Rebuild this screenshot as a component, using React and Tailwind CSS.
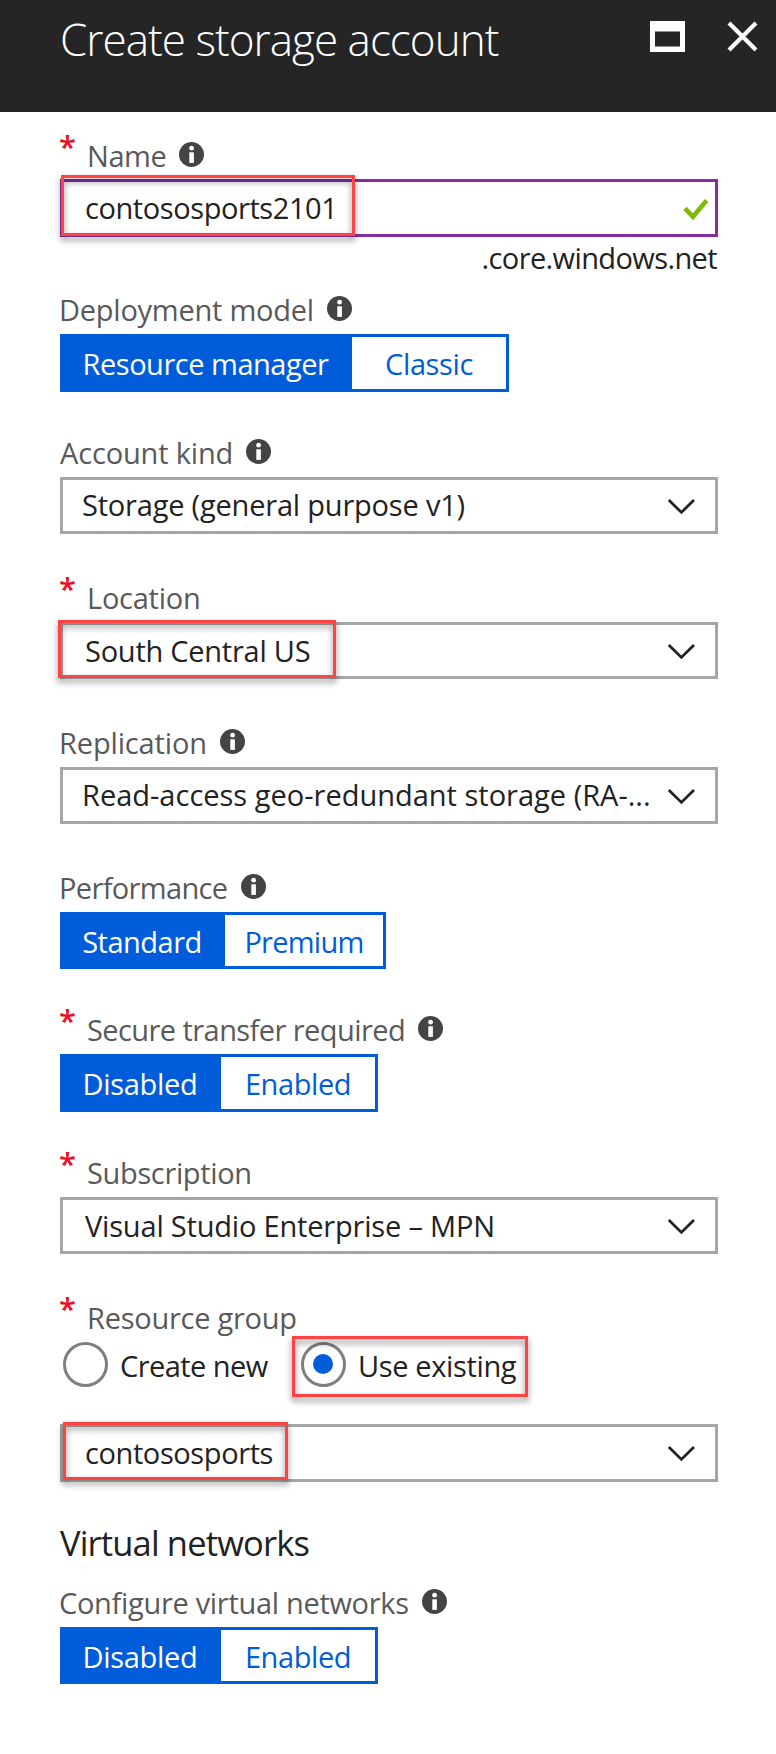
const InfoIcon = () => (
  <svg className="mt-[6px] ml-[13px] h-[25px] w-[25px] shrink-0" viewBox="0 0 25 25">
    <circle cx="12.5" cy="12.5" r="12.5" fill="#444" />
    <circle cx="12.6" cy="6.2" r="2.4" fill="#fff" />
    <rect x="10.3" y="10.3" width="4.6" height="10.6" fill="#fff" />
  </svg>
);

const Chevron = () => (
  <svg className="mt-[18px] mr-[20px] h-[17px] w-[28px] shrink-0" viewBox="0 0 28 17" fill="none">
    <path d="M1.8 2L14.4 14.4L27 2" stroke="#222" strokeWidth="2.8" />
  </svg>
);

const Check = () => (
  <svg className="mt-[16px] mr-[6px] h-[23px] w-[26px] shrink-0" viewBox="0 0 26 23" fill="none">
    <path d="M2 10.4L10 18.8L23.6 2.4" stroke="#7fba00" strokeWidth="4.6" />
  </svg>
);

const Highlight = ({ className }) => (
  <div
    className={`pointer-events-none absolute border-[3px] border-[#ff4343] drop-shadow-[0_4px_3px_rgba(0,0,0,0.5)] ${className}`}
  />
);

function Label({ text, tracking, required, info, offset = "-ml-[1px]" }) {
  return (
    <div className="flex h-[40px] items-start text-[#595959]">
      {required && (
        <span className="-mt-[10px] -ml-[1px] w-[28px] text-[31px] font-semibold text-[#e81123]">*</span>
      )}
      <span className={`${required ? "" : offset} ${tracking}`}>{text}</span>
      {info && <InfoIcon />}
    </div>
  );
}

function Select({ text, tracking, inset, top = "pt-[5px]", height = "h-[57px]", children }) {
  return (
    <div className={`relative flex items-start justify-between border-[3px] border-[#a6a6a6] ${height}`}>
      <span className={`${top} ${inset} ${tracking}`}>{text}</span>
      <Chevron />
      {children}
    </div>
  );
}

function Toggle({ on, off, onClass, offClass, height = "h-[58px]" }) {
  return (
    <div className={`flex w-fit border-[3px] border-[#015cda] bg-white ${height}`}>
      <div className={`flex justify-center bg-[#015cda] pt-[7px] pr-[4px] text-white ${onClass}`}>{on}</div>
      <div className={`flex justify-center pt-[7px] text-[#015cda] ${offClass}`}>{off}</div>
    </div>
  );
}

export default function App() {
  return (
    <div className="h-[1754px] w-[776px] overflow-hidden bg-white font-['Open_Sans',sans-serif] text-[29px] leading-[40px] whitespace-nowrap text-[#222]">
      <header className="flex h-[112px] items-start bg-[#252525] pl-[60px] text-white">
        <h1 className="w-[590px] pt-[9px] text-[44px] leading-[60px] font-light tracking-[-0.97px]">
          Create storage account
        </h1>
        <svg className="mt-[21px] h-[31px] w-[35px]" viewBox="0 0 35 31">
          <path d="M0 0H35V31H0ZM5 10.5V25.5H30V10.5Z" fill="#fff" fillRule="evenodd" />
        </svg>
        <svg className="mt-[21px] ml-[42px] h-[31px] w-[31px]" viewBox="0 0 31 31">
          <path d="M2 2L29 29M29 2L2 29" stroke="#fff" strokeWidth="4.2" />
        </svg>
      </header>

      <main className="flex w-[718px] flex-col pt-[24px] pl-[60px]">
        <section className="flex flex-col gap-[3px]">
          <Label text="Name" tracking="tracking-[-0.45px]" required info />
          <div className="relative flex h-[58px] items-start justify-between border-[3px] border-[#862da3]">
            <span className="pt-[6px] pl-[22px] tracking-[-0.42px]">contososports2101</span>
            <Check />
            <Highlight className="-top-[7px] -left-[2px] h-[61px] w-[294px]" />
          </div>
        </section>
        <div className="mt-[1px] pr-[1px] text-right tracking-[-0.61px]">.core.windows.net</div>

        <section className="mt-[12px] flex flex-col gap-1">
          <Label text="Deployment model" tracking="tracking-[-0.25px]" info />
          <Toggle
            on="Resource manager"
            off="Classic"
            onClass="w-[289px] tracking-[-0.48px]"
            offClass="w-[154px] tracking-[-0.39px]"
          />
        </section>

        <section className="mt-[41px] flex flex-col gap-1">
          <Label text="Account kind" tracking="tracking-[-0.16px]" offset="ml-0" info />
          <Select text="Storage (general purpose v1)" tracking="tracking-[-0.2px]" inset="pl-[19px]" />
        </section>

        <section className="mt-[44px] flex flex-col gap-1">
          <Label text="Location" tracking="tracking-[-0.25px]" required />
          <Select text="South Central US" tracking="tracking-[-0.25px]" inset="pl-[22px]" top="pt-[6px]">
            <Highlight className="-top-[5px] -left-[5px] h-[58px] w-[278px]" />
          </Select>
        </section>

        <section className="mt-[44px] flex flex-col gap-1">
          <Label text="Replication" tracking="tracking-[-0.15px]" info />
          <Select text="Read-access geo-redundant storage (RA-..." tracking="tracking-[0px]" inset="pl-[19px]" />
        </section>

        <section className="mt-[44px] flex flex-col gap-1">
          <Label text="Performance" tracking="tracking-[-0.64px]" info />
          <Toggle
            on="Standard"
            off="Premium"
            onClass="w-[162px] tracking-[-0.48px]"
            offClass="w-[158px] tracking-[-0.75px]"
            height="h-[57px]"
          />
        </section>

        <section className="mt-[41px] flex flex-col gap-1">
          <Label text="Secure transfer required" tracking="tracking-[-0.57px]" required info />
          <Toggle
            on="Disabled"
            off="Enabled"
            onClass="w-[158px] tracking-[-0.29px]"
            offClass="w-[154px] tracking-[-0.42px]"
          />
        </section>

        <section className="mt-[41px] flex flex-col gap-1">
          <Label text="Subscription" tracking="tracking-[-0.35px]" required />
          <Select text="Visual Studio Enterprise – MPN" tracking="tracking-[-0.19px]" inset="pl-[22px]" top="pt-[6px]" />
        </section>

        <section className="mt-[44px] flex flex-col">
          <Label text="Resource group" tracking="tracking-[-0.26px]" required />
          <div className="relative mt-1 mb-[37px] flex h-[45px] items-start pl-[3px]">
            <span className="h-[45px] w-[45px] rounded-full border-[3px] border-[#7f7f7f]" />
            <span className="w-[193px] pt-[4px] pl-[12px] tracking-[-0.56px]">Create new</span>
            <span className="flex h-[45px] w-[45px] items-center justify-center rounded-full border-[3px] border-[#7f7f7f] pr-[1px] pb-[1px]">
              <span className="h-[20px] w-[20px] rounded-full bg-[#015cda]" />
            </span>
            <span className="pt-[4px] pl-[12px] tracking-[-0.36px]">Use existing</span>
            <Highlight className="-top-[6px] left-[232px] h-[61px] w-[236px]" />
          </div>
          <Select text="contososports" tracking="tracking-[-0.4px]" inset="pl-[22px]" top="pt-[6px]" height="h-[58px]">
            <Highlight className="-top-[5px] left-0 h-[58px] w-[225px]" />
          </Select>
        </section>

        <h2 className="mt-[37px] text-[34.5px] leading-[48px] tracking-[-0.85px]">Virtual networks</h2>

        <section className="mt-[16px] flex flex-col gap-1">
          <Label text="Configure virtual networks" tracking="tracking-[-0.31px]" info />
          <Toggle
            on="Disabled"
            off="Enabled"
            onClass="w-[158px] tracking-[-0.29px]"
            offClass="w-[154px] tracking-[-0.42px]"
            height="h-[57px]"
          />
        </section>
      </main>
    </div>
  );
}
